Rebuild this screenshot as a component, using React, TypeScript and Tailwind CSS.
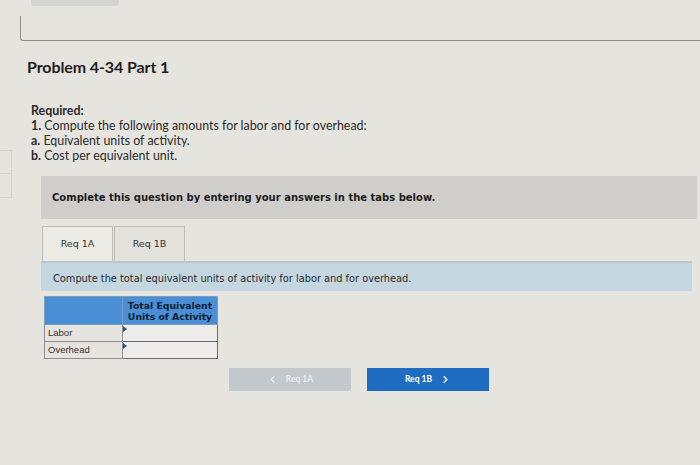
import { ChevronLeft, ChevronRight } from "lucide-react";

const body = "font-['Lato','Open_Sans','Liberation_Sans',sans-serif]";
const verdana = "font-['DejaVu_Sans','Liberation_Sans',sans-serif]";

function Tab({ label, active }: { label: string; active?: boolean }) {
  return (
    <div
      className={`w-[71px] h-[35px] flex items-center justify-center border border-[#bdbcb8] border-b-0 text-[9.5px] text-[#333] ${verdana} ${
        active ? "bg-[#eceae5]" : "bg-[#e3e1dc]"
      }`}
    >
      {label}
    </div>
  );
}

export default function App() {
  return (
    <div className={`w-[700px] h-[465px] overflow-hidden bg-[#e6e4df] text-[#222] ${body}`}>
      {/* top remnants */}
      <div className="ml-[31px] w-[88px] h-[6px] bg-[#d4d4d4] rounded-b-[3px]" />
      <div className="ml-[20px] mt-[10px] h-[25px] border-l border-b border-[#8f8f8f] rounded-bl-[3px]" />

      <div className="flex">
        {/* cut-off side panel */}
        <div className="w-[12px] pt-[109px] flex flex-col">
          <div className="h-[24px] border border-l-0 border-[#d3d1cc]" />
          <div className="h-[24px] border border-l-0 border-t-0 border-[#d3d1cc]" />
        </div>

        <div className="flex-1 pl-[15px]">
          <h1 className="mt-[16px] text-[16px] leading-[20px] font-bold tracking-[-0.1px] text-[#1e1e1e]">
            Problem 4-34 Part 1
          </h1>

          <div className="mt-[26px] ml-[4px] text-[12.4px] leading-[15px] text-[#2a2a2a]">
            <div className="font-bold">Required:</div>
            <div>
              <span className="font-bold">1.</span> Compute the following amounts for labor and for overhead:
            </div>
            <div>
              <span className="font-bold">a.</span> Equivalent units of activity.
            </div>
            <div>
              <span className="font-bold">b.</span> Cost per equivalent unit.
            </div>
          </div>

          <div className="mt-[13px] ml-[14px] mr-[3px] h-[43px] bg-[#cfcecb] flex items-center pl-[11px]">
            <span className={`text-[10px] font-bold text-[#1c1c1c] ${verdana}`}>
              Complete this question by entering your answers in the tabs below.
            </span>
          </div>

          <div className="ml-[17px] mr-[8px] mt-[7px]">
            <div className="flex gap-[1px] -ml-[2px]">
              <Tab label="Req 1A" active />
              <Tab label="Req 1B" />
            </div>
            <div className="-ml-[3px] h-[30px] bg-[#c4d6df] border-t-2 border-[#b6c9d3] flex items-center pl-[12px] pt-[5px]">
              <span className={`text-[9.8px] text-[#2b2b2b] ${verdana}`}>
                Compute the total equivalent units of activity for labor and for overhead.
              </span>
            </div>

            <table className="mt-[5px] border-collapse text-[9.5px]">
              <tbody>
                <tr className="h-[28px] bg-[#4a8ed6]">
                  <td className="w-[78px] border border-[#7a9cc0]" />
                  <td className={`w-[95px] border border-[#7a9cc0] text-center align-middle text-[9.3px] leading-[11px] font-bold text-[#0f1f33] ${verdana}`}>
                    Total Equivalent
                    <br />
                    Units of Activity
                  </td>
                </tr>
                {["Labor", "Overhead"].map((r) => (
                  <tr key={r} className="h-[17px]">
                    <td className="border border-[#8e8e8e] pl-[3px] text-[#333] font-['Liberation_Sans',sans-serif]">{r}</td>
                    <td className="border border-[#6b6b6b] bg-[#edece8] relative p-0">
                      <span className="absolute left-0 top-[1px] w-0 h-0 border-y-[3px] border-y-transparent border-l-[4px] border-l-[#2a4f8a]" />
                    </td>
                  </tr>
                ))}
              </tbody>
            </table>

            <div className="mt-[9px] ml-[185px] flex gap-[16px]">
              <div className="w-[122px] h-[23px] bg-[#c3c8cd] flex items-center justify-center gap-[8px] text-[8.5px] font-bold text-[#e9ecef]">
                <ChevronLeft className="size-[11px]" strokeWidth={3} />
                <span>Req 1A</span>
              </div>
              <div className="w-[122px] h-[23px] bg-[#1f6cc3] flex items-center justify-center gap-[8px] text-[8.5px] font-bold text-white">
                <span>Req 1B</span>
                <ChevronRight className="size-[11px]" strokeWidth={3} />
              </div>
            </div>
          </div>
        </div>
      </div>
    </div>
  );
}
